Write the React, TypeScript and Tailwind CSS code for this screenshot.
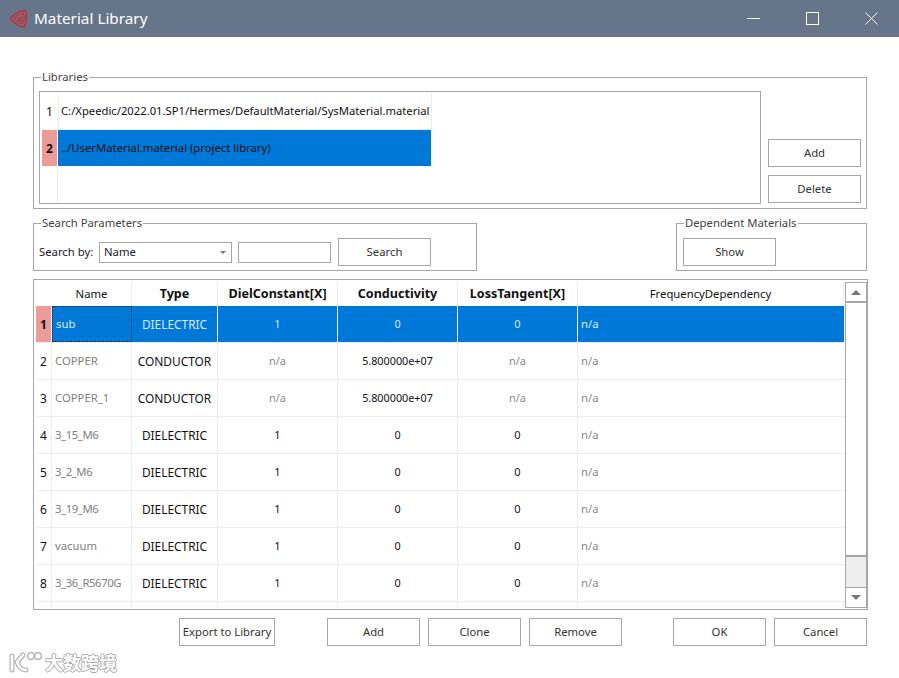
import type { ReactNode } from "react";

const FONT = "font-['Noto_Sans','Open_Sans',sans-serif]";
const TEXT = "text-[11.3px]";

const COLUMNS = [
  { label: "Name", w: "w-[80px]", bold: false },
  { label: "Type", w: "w-[86px]", bold: true },
  { label: "DielConstant[X]", w: "w-[120px]", bold: true },
  { label: "Conductivity", w: "w-[120px]", bold: true },
  { label: "LossTangent[X]", w: "w-[120px]", bold: true },
  { label: "FrequencyDependency", w: "w-[266px]", bold: false },
];

const MATERIALS = [
  { name: "sub", type: "DIELECTRIC", diel: "1", cond: "0", loss: "0" },
  { name: "COPPER", type: "CONDUCTOR", diel: "n/a", cond: "5.800000e+07", loss: "n/a" },
  { name: "COPPER_1", type: "CONDUCTOR", diel: "n/a", cond: "5.800000e+07", loss: "n/a" },
  { name: "3_15_M6", type: "DIELECTRIC", diel: "1", cond: "0", loss: "0" },
  { name: "3_2_M6", type: "DIELECTRIC", diel: "1", cond: "0", loss: "0" },
  { name: "3_19_M6", type: "DIELECTRIC", diel: "1", cond: "0", loss: "0" },
  { name: "vacuum", type: "DIELECTRIC", diel: "1", cond: "0", loss: "0" },
  { name: "3_36_R5670G", type: "DIELECTRIC", diel: "1", cond: "0", loss: "0" },
];

function Btn({ children, w = "w-[93px]", pad = "" }: { children: ReactNode; w?: string; pad?: string }) {
  return (
    <button
      type="button"
      className={`${w} ${pad} h-[28px] shrink-0 whitespace-nowrap border border-[#a6a6a6] bg-white text-center ${TEXT} text-[#333]`}
    >
      {children}
    </button>
  );
}

function Group({ title, className, children }: { title: string; className: string; children: ReactNode }) {
  return (
    <fieldset className={`border border-[#a6a6a6] ${className}`}>
      <legend className={`ml-[7px] px-[1px] ${TEXT} leading-[14px] text-[#444]`}>{title}</legend>
      {children}
    </fieldset>
  );
}

function RowHead({ n, active }: { n: number; active: boolean }) {
  return (
    <div
      className={`flex h-[36px] w-[15px] shrink-0 items-center justify-center pt-[1px] text-[12px] ${
        active ? "bg-[#eb9b98] font-bold text-[#111]" : "text-[#111]"
      }`}
    >
      {n}
    </div>
  );
}

function AppLogo() {
  return (
    <svg width="20" height="20" viewBox="0 0 20 20" fill="none" stroke="#b8323e" strokeWidth="1.2">
      <path d="M1.5 9.5 C5 5 10 2 16.5 1.5 C18 7 18 13 15 18 C9.5 17.5 5 14 1.5 9.5Z" fill="#8a6a78" strokeWidth="1.5" />
      <path d="M5 9.5 C8 6.5 11 5 14.5 4.5 C15.5 8 15 12 13.5 15 C10 14 7 12 5 9.5Z" />
      <path d="M8.5 9.5 C10 8.5 11 8 12.5 8 C12.5 9.5 12.5 10.5 12 12 C10.5 11.5 9.5 10.5 8.5 9.5Z" />
    </svg>
  );
}

function Watermark() {
  return (
    <div className="absolute left-[8px] top-[650px] flex items-center gap-[3px]">
      <svg width="34" height="24" viewBox="0 0 34 24" fill="none" strokeLinecap="round">
        <g stroke="#b4b4b4" strokeWidth="5">
          <path d="M4 6 V20" />
          <path d="M15 5 L9 12 C11 18 14 20 18 20" />
        </g>
        <g stroke="#fff" strokeWidth="2.6">
          <path d="M4 6 V20" />
          <path d="M15 5 L9 12 C11 18 14 20 18 20" />
        </g>
        <circle cx="23" cy="6" r="3.5" fill="#fff" stroke="#b4b4b4" strokeWidth="1.6" />
        <circle cx="30" cy="6" r="3.5" fill="#fff" stroke="#b4b4b4" strokeWidth="1.6" />
      </svg>
      <span className="font-['Noto_Sans_CJK_SC',sans-serif] text-[18px] font-bold leading-[24px] text-white [text-shadow:1px_0_0_#aaa,-1px_0_0_#aaa,0_1px_0_#aaa,0_-1px_0_#aaa]">
        大数跨境
      </span>
    </div>
  );
}

function Scrollbar() {
  return (
    <div className="flex h-[326px] w-[22px] shrink-0 flex-col border border-[#a6a6a6] bg-[#eeeeee]">
      <div className="flex h-[20px] shrink-0 items-center justify-center border-b-2 border-[#a6a6a6] bg-white">
        <div className="h-0 w-0 border-x-[5px] border-b-[5px] border-x-transparent border-b-[#777]" />
      </div>
      <div className="h-[254px] shrink-0 border-b-2 border-[#a6a6a6] bg-white" />
      <div className="flex-1" />
      <div className="flex h-[20px] shrink-0 items-center justify-center border-t border-[#a6a6a6] bg-white">
        <div className="h-0 w-0 border-x-[5px] border-t-[5px] border-x-transparent border-t-[#777]" />
      </div>
    </div>
  );
}

function MaterialRow({ n, m }: { n: number; m: (typeof MATERIALS)[number] }) {
  const sel = n === 1;
  const cell = `flex h-full items-center justify-center border-r pt-[1px] ${
    sel ? "border-white bg-[#0078d7]" : "border-[#ececec]"
  }`;
  const soft = (v: string) =>
    sel ? "text-[#dcebf8]" : v === "n/a" ? "text-[#8a8a8a] text-[11.3px]" : "text-[#111]";
  const digits = /^\d/.test(m.name);
  return (
    <div className="flex h-[37px] shrink-0 border-b border-[#ececec]">
      <div className={`flex h-full w-[15px] shrink-0 items-center justify-center pt-[1px] text-[12px] ${sel ? "bg-[#eb9b98] font-bold text-[#111]" : "text-[#111]"}`}>
        {n}
      </div>
      <div className={`w-[1px] shrink-0 ${sel ? "bg-white" : "bg-[#ececec]"}`} />
      <div
        className={`flex h-full w-[80px] items-center border-r pl-[3px] pt-[1px] ${TEXT} ${digits ? "tracking-[-0.4px]" : ""} ${
          sel ? "border border-dotted border-[#222] bg-[#0078d7] text-[#dcebf8]" : "border-[#ececec] text-[#808080]"
        }`}
      >
        {m.name}
      </div>
      <div className={`${cell} w-[86px] text-[11.9px] ${sel ? "text-[#dcebf8]" : "text-[#111]"}`}>{m.type}</div>
      <div className={`${cell} w-[120px] text-[11px] ${soft(m.diel)}`}>{m.diel}</div>
      <div className={`${cell} w-[120px] text-[10.8px] ${soft(m.cond)}`}>{m.cond}</div>
      <div className={`${cell} w-[120px] text-[11px] ${soft(m.loss)}`}>{m.loss}</div>
      <div className={`flex h-full w-[266px] items-center pl-[3px] pt-[1px] ${TEXT} ${sel ? "bg-[#0078d7] text-[#dcebf8]" : "text-[#8a8a8a]"}`}>
        n/a
      </div>
    </div>
  );
}

export default function App() {
  return (
    <div className={`relative h-[678px] w-[899px] overflow-hidden bg-white ${FONT}`}>
      {/* Title bar */}
      <div className="flex h-[37px] items-center bg-[#66758a] pl-[9px] text-white">
        <AppLogo />
        <span className="ml-[5px] text-[15.3px]">Material Library</span>
        <div className="ml-auto flex items-center gap-[46px] pr-[21px]">
          <svg width="13" height="13" viewBox="0 0 13 13" stroke="#fff" strokeWidth="1"><path d="M0 6.5H13" /></svg>
          <svg width="13" height="13" viewBox="0 0 13 13" stroke="#fff" strokeWidth="1" fill="none"><rect x="0.5" y="0.5" width="12" height="12" /></svg>
          <svg width="13" height="13" viewBox="0 0 13 13" stroke="#fff" strokeWidth="1"><path d="M0.5 0.5L12.5 12.5M12.5 0.5L0.5 12.5" /></svg>
        </div>
      </div>

      <div className="flex flex-col pl-[33px] pt-[33px]">
        {/* Libraries */}
        <Group title="Libraries" className="h-[139px] w-[834px]">
          <div className="flex pl-[5px] pt-[7px]">
            <div className="flex h-[113px] w-[722px] shrink-0 flex-col border border-[#a6a6a6] pl-[2px] pt-[1px]">
              <div className="flex h-[37px] shrink-0">
                <RowHead n={1} active={false} />
                <div className="ml-[1px] flex h-[37px] w-[374px] items-center border-x border-b border-[#ececec] pl-[2px] pt-[1px] text-[11.25px] text-[#111]">
                  C:/Xpeedic/2022.01.SP1/Hermes/DefaultMaterial/SysMaterial.material
                </div>
              </div>
              <div className="flex h-[36px] shrink-0">
                <RowHead n={2} active />
                <div className="ml-[1px] flex h-[36px] w-[373px] items-center bg-[#0078d7] pl-[3px] pt-[1px] text-[11.3px] text-[#111]">
                  ../UserMaterial.material (project library)
                </div>
              </div>
              <div className="w-[16px] flex-1 border-r border-[#ececec]" />
            </div>
            <div className="ml-[7px] flex flex-col gap-[8px] pt-[48px]">
              <Btn pad="pt-[1px]">Add</Btn>
              <Btn pad="pt-[1px]">Delete</Btn>
            </div>
          </div>
        </Group>

        {/* Search + dependent materials */}
        <div className="mt-[7px] flex w-[834px] justify-between">
          <Group title="Search Parameters" className="h-[55px] w-[444px]">
            <div className={`flex items-center pl-[5px] pt-[8px] ${TEXT} text-[#222]`}>
              <span className="w-[60px] shrink-0 pt-[1px]">Search by:</span>
              <div className="flex h-[21px] w-[133px] shrink-0 items-center justify-between border border-[#a6a6a6] pl-[4px] pr-[5px]">
                Name
                <div className="h-0 w-0 border-x-[3px] border-t-[3px] border-x-transparent border-t-[#777]" />
              </div>
              <div className="ml-[6px] h-[21px] w-[93px] shrink-0 border border-[#a6a6a6]" />
              <div className="ml-[7px]">
                <Btn pad="pt-[1px]">Search</Btn>
              </div>
            </div>
          </Group>
          <Group title="Dependent Materials" className="h-[55px] w-[191px]">
            <div className="pl-[6px] pt-[8px]">
              <Btn pad="pt-[1px]">Show</Btn>
            </div>
          </Group>
        </div>

        {/* Materials table */}
        <div className="mt-[8px] flex h-[331px] w-[835px] border border-[#a6a6a6] pl-[2px] pt-[2px]">
          <div className="flex h-[326px] w-[809px] shrink-0 flex-col overflow-hidden">
            <div className="flex h-[24px] shrink-0">
              <div className="w-[16px] shrink-0" />
              {COLUMNS.map((c) => (
                <div
                  key={c.label}
                  className={`flex h-full shrink-0 items-center justify-center border-r border-[#ececec] text-[#111] ${c.w} ${c.bold ? "text-[12.6px] font-bold" : TEXT}`}
                >
                  {c.label}
                </div>
              ))}
            </div>
            {MATERIALS.map((m, i) => (
              <MaterialRow key={m.name} n={i + 1} m={m} />
            ))}
            <div className="flex h-[10px] shrink-0">
              <div className="w-[16px] shrink-0 border-r border-[#ececec]" />
              {COLUMNS.map((c) => (
                <div key={c.label} className={`shrink-0 border-r border-[#ececec] ${c.w}`} />
              ))}
            </div>
          </div>
          <Scrollbar />
        </div>

        {/* Bottom buttons */}
        <div className="mt-[8px] flex w-[834px] pl-[146px]">
          <Btn w="w-[96px]">Export to Library</Btn>
          <div className="ml-[52px] flex gap-[8px]">
            <Btn>Add</Btn>
            <Btn>Clone</Btn>
            <Btn>Remove</Btn>
          </div>
          <div className="ml-auto flex gap-[8px]">
            <Btn>OK</Btn>
            <Btn>Cancel</Btn>
          </div>
        </div>
      </div>

      <Watermark />
    </div>
  );
}
